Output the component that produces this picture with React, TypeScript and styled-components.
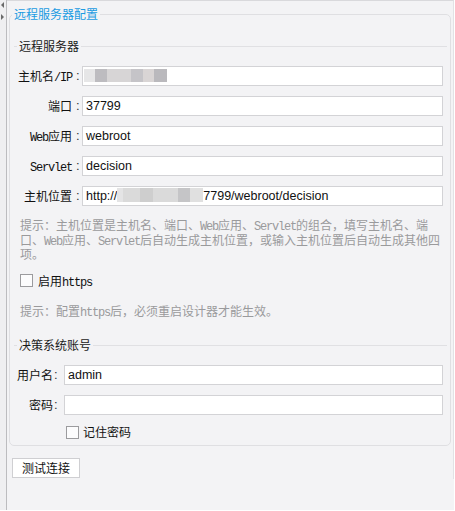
import React from "react";
import styled, { createGlobalStyle } from "styled-components";

const Global = createGlobalStyle`
  html, body { margin: 0; padding: 0; background: #ffffff; }
  body {
    font-family: "Noto Sans CJK SC", "Noto Sans", sans-serif;
    font-size: 12px;
    color: #1a1a1a;
  }
`;

const Screen = styled.div`
  display: flex;
  align-items: flex-start;
  width: 454px;
  height: 510px;
  background: #f3f3f5;
`;

const SideStrip = styled.div`
  flex: none;
  width: 7px;
  height: 100%;
  box-sizing: border-box;
  background: #efeff1;
  border-right: 1px solid #bcbcbf;
  display: flex;
  flex-direction: column;
  align-items: flex-start;
  padding: 2px 0 0 1px;
  gap: 6px;
`;

const Arrow = styled.span<{ $dir: "left" | "right" }>`
  width: 0;
  height: 0;
  border-top: 3px solid transparent;
  border-bottom: 3px solid transparent;
  ${(p) =>
    p.$dir === "left"
      ? "border-right: 3px solid #6a6a6a;"
      : "border-left: 3px solid #6a6a6a;"}
`;

const Panel = styled.div`
  flex: none;
  width: 447px;
  height: 479px;
  box-sizing: border-box;
  border-top: 1px solid #d9d9dc;
  border-right: 1px solid #e2e2e5;
  padding-top: 5px;
  display: flex;
  flex-direction: column;
  align-items: stretch;
`;

const Group = styled.fieldset`
  margin: 0 2px;
  min-width: 0;
  border: 1px solid #dfdfe2;
  border-radius: 5px;
  padding: 16px 3px 5px 4px;
`;

const GroupTitle = styled.legend`
  font-size: 12px;
  line-height: 16px;
  color: #1b9be2;
  padding: 0 2px;
  margin-left: -2px;
`;

const Section = styled.fieldset<{ $top?: number }>`
  margin: ${(p) => p.$top ?? 0}px 0 0 0;
  min-width: 0;
  border: 0;
  border-top: 1px solid #e0e0e3;
  padding: 12px 0 0 0;
`;

const SectionTitle = styled.legend`
  font-size: 12px;
  line-height: 16px;
  color: #1a1a1a;
  padding: 0 2px;
  margin-left: 3px;
`;

const Rows = styled.div`
  display: flex;
  flex-direction: column;
  gap: 10px;
`;

const Row = styled.div`
  display: flex;
  align-items: center;
  height: 20px;
  padding-right: 4px;
`;

const Label = styled.span<{ $w: number }>`
  flex: none;
  width: ${(p) => p.$w}px;
  text-align: right;
  line-height: 20px;
  white-space: nowrap;
  color: #111;
`;

const Colon = styled.span<{ $w: number; $pad: number }>`
  flex: none;
  width: ${(p) => p.$w}px;
  padding-left: ${(p) => p.$pad}px;
  box-sizing: border-box;
  font-family: "Liberation Sans", sans-serif;
  font-size: 13px;
  line-height: 20px;
  color: #333;
`;

const Mono = styled.span`
  font-family: "Liberation Mono", "DejaVu Sans Mono", monospace;
  font-size: 12px;
  letter-spacing: -1.2px;
  line-height: 10px;
`;

const Field = styled.div`
  flex: 1;
  min-width: 0;
  height: 20px;
  box-sizing: border-box;
  border: 1px solid #d3d3d6;
  background: #ffffff;
  padding: 0 3px;
  display: flex;
  align-items: center;
  white-space: nowrap;
  overflow: hidden;
  font-family: "Liberation Sans", Arial, sans-serif;
  font-size: 12.5px;
  color: #111;
`;

const Mosaic = styled.span<{ $shift: number; $h: number }>`
  display: inline-flex;
  flex: none;
  height: ${(p) => p.$h}px;
  margin-left: ${(p) => p.$shift}px;
  margin-bottom: 2px;
  filter: blur(0.6px);
`;

const Block = styled.span<{ $w: number; $c: string }>`
  flex: none;
  width: ${(p) => p.$w}px;
  height: 100%;
  background: ${(p) => p.$c};
`;

const Hint = styled.div<{ $top: number }>`
  margin-top: ${(p) => p.$top}px;
  padding: 0 2px 0 6px;
  color: #9a9a9c;
  font-size: 12px;
  line-height: 14.5px;
  white-space: nowrap;
`;

const CheckRow = styled.label<{ $top: number; $indent: number; $gap: number }>`
  display: flex;
  align-items: center;
  gap: ${(p) => p.$gap}px;
  height: 16px;
  margin-top: ${(p) => p.$top}px;
  padding-left: ${(p) => p.$indent}px;
  color: #111;
  line-height: 16px;
`;

const Box = styled.span`
  flex: none;
  width: 13px;
  height: 13px;
  box-sizing: border-box;
  border: 1px solid #9b9b9e;
  background: #fcfcfd;
`;

const Button = styled.button`
  align-self: flex-start;
  margin: 12px 0 0 5px;
  width: 68px;
  height: 20px;
  padding: 0;
  border: 1px solid #cfcfd2;
  background: #ffffff;
  font-family: "Noto Sans CJK SC", sans-serif;
  font-size: 12px;
  line-height: 18px;
  color: #111;
`;

const ipBlocks: [number, string][] = [
  [11, "#e6e6e7"],
  [12, "#bdbcc0"],
  [24, "#d7d5d6"],
  [12, "#c5c4c8"],
  [11, "#d9d5d5"],
  [13, "#bab9bd"],
];

const hostBlocks: [number, string][] = [
  [6, "#e4e4e5"],
  [17, "#dadada"],
  [13, "#cecece"],
  [25, "#dadada"],
  [12, "#c5c5c7"],
  [13, "#e0e0e0"],
];

const renderMosaic = (blocks: [number, string][], shift: number, h: number) => (
  <Mosaic $shift={shift} $h={h}>
    {blocks.map(([w, c], i) => (
      <Block key={i} $w={w} $c={c} />
    ))}
  </Mosaic>
);

const S1 = { w: 58, cw: 10, cp: 4 };
const S2 = { w: 39, cw: 11, cp: 1 };

export default function App() {
  return (
    <>
      <Global />
      <Screen>
        <SideStrip>
          <Arrow $dir="left" />
          <Arrow $dir="right" />
        </SideStrip>
        <Panel>
          <Group>
            <GroupTitle>远程服务器配置</GroupTitle>
            <Section>
              <SectionTitle>远程服务器</SectionTitle>
              <Rows>
                <Row>
                  <Label $w={S1.w}>
                    主机名<Mono>/IP</Mono>
                  </Label>
                  <Colon $w={S1.cw} $pad={S1.cp}>:</Colon>
                  <Field>{renderMosaic(ipBlocks, -2, 13)}</Field>
                </Row>
                <Row>
                  <Label $w={S1.w}>端口</Label>
                  <Colon $w={S1.cw} $pad={S1.cp}>:</Colon>
                  <Field>37799</Field>
                </Row>
                <Row>
                  <Label $w={S1.w}>
                    <Mono>Web</Mono>应用
                  </Label>
                  <Colon $w={S1.cw} $pad={S1.cp}>:</Colon>
                  <Field>webroot</Field>
                </Row>
                <Row>
                  <Label $w={S1.w}>
                    <Mono>Servlet</Mono>
                  </Label>
                  <Colon $w={S1.cw} $pad={S1.cp}>:</Colon>
                  <Field>decision</Field>
                </Row>
                <Row>
                  <Label $w={S1.w}>主机位置</Label>
                  <Colon $w={S1.cw} $pad={S1.cp}>:</Colon>
                  <Field>
                    http://
                    {renderMosaic(hostBlocks, 0, 14)}
                    7799/webroot/decision
                  </Field>
                </Row>
              </Rows>
              <Hint $top={12}>
                提示：主机位置是主机名、端口、<Mono>Web</Mono>应用、<Mono>Servlet</Mono>的组合，填写主机名、端
                <br />
                口、<Mono>Web</Mono>应用、<Mono>Servlet</Mono>后自动生成主机位置，或输入主机位置后自动生成其他四
                <br />
                项。
              </Hint>
              <CheckRow $top={11} $indent={6} $gap={5}>
                <Box />
                <span>
                  启用<Mono>https</Mono>
                </span>
              </CheckRow>
              <Hint $top={15}>
                提示：配置<Mono>https</Mono>后，必须重启设计器才能生效。
              </Hint>
            </Section>
            <Section $top={19}>
              <SectionTitle>决策系统账号</SectionTitle>
              <Rows>
                <Row>
                  <Label $w={S2.w}>用户名</Label>
                  <Colon $w={S2.cw} $pad={S2.cp}>:</Colon>
                  <Field>admin</Field>
                </Row>
                <Row>
                  <Label $w={S2.w}>密码</Label>
                  <Colon $w={S2.cw} $pad={S2.cp}>:</Colon>
                  <Field />
                </Row>
              </Rows>
              <CheckRow $top={9} $indent={52} $gap={4}>
                <Box />
                <span>记住密码</span>
              </CheckRow>
            </Section>
          </Group>
          <Button>测试连接</Button>
        </Panel>
      </Screen>
    </>
  );
}
